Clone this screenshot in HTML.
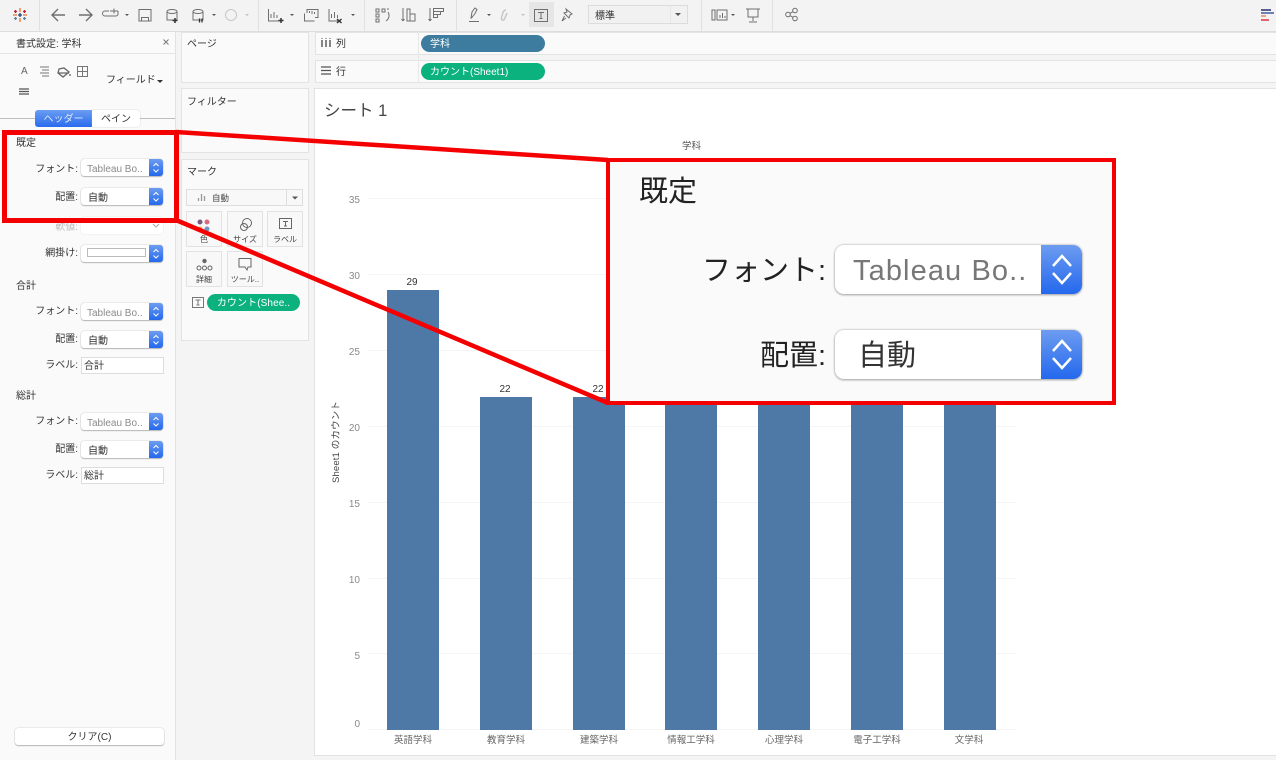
<!DOCTYPE html>
<html lang="ja"><head><meta charset="utf-8"><title>書式設定</title>
<style>
html,body{margin:0;padding:0}
body{width:1276px;height:760px;position:relative;overflow:hidden;background:#f4f4f4;font-family:"Liberation Sans","Noto Sans CJK JP",sans-serif;color:#333}
.a{position:absolute;white-space:nowrap}
.p{position:absolute;background:#fafafa;border:1px solid #e3e3e3;box-sizing:border-box}
.t{position:absolute;white-space:nowrap;font-size:10px;line-height:14px;margin-top:2px}
.l{position:absolute;white-space:nowrap;font-size:10px;line-height:14px;text-align:right;width:70px;left:8px;color:#333;margin-top:2px}
.s{position:absolute;left:81px;width:82px;height:17px;background:#fff;border-radius:3px;box-shadow:0 0 1px #999,0 1px 1px #bbb;font-size:10px;line-height:21px;padding-left:7px;box-sizing:border-box;color:#333}
.s.g{color:#8a8a8a;padding-left:6px}
.s i,.B i{position:absolute;right:0;top:0;width:14px;height:100%;background:linear-gradient(#6d9cf0,#2468ee);border-radius:0 3px 3px 0}
.s svg{position:absolute;right:0;top:0}
.i{position:absolute;left:81px;width:83px;height:17px;background:#fff;border:1px solid #ddd;box-sizing:border-box;font-size:10px;line-height:17px;padding-left:2px;color:#333}
.pill{position:absolute;left:421px;width:124px;border-radius:9px;color:#fff;font-size:10px;padding-left:9px;box-sizing:border-box}
.m{position:absolute;width:36px;height:36px;background:#f8f8f8;border:1px solid #e2e2e2;box-sizing:border-box;font-size:8px;line-height:10px;text-align:center;color:#444}
.m span{position:absolute;left:0;right:0;bottom:1px}
.bar{position:absolute;width:52px;background:#4e79a7;bottom:30.5px}
.y{position:absolute;left:330px;width:30px;text-align:right;font-size:10px;line-height:12px;color:#8a8a8a;margin-top:2px}
.g1{position:absolute;left:368px;width:648px;height:1px;background:#f5f5f5}
.x{position:absolute;top:734px;width:92px;text-align:center;font-size:9.500px;line-height:13px;color:#666}
.v{position:absolute;width:52px;text-align:center;font-size:10px;line-height:12px;color:#333;margin-top:2px}
.B{position:absolute;left:835px;width:247px;height:49px;background:#fff;border-radius:9px;box-shadow:0 0 2px #aaa,0 1px 2px #aaa;box-sizing:border-box;font-size:29px;line-height:53px}
.B i{width:41px;border-radius:0 9px 9px 0}
.B svg{position:absolute;right:0;top:0}
.L{position:absolute;right:450px;white-space:nowrap;font-size:29px;line-height:40px;color:#222}
</style></head><body>

<!-- toolbar -->
<div class="a" style="left:0;top:0;width:1276px;height:32px;background:#f3f3f3;border-bottom:1px solid #ddd;box-sizing:border-box"></div>
<div class="a" style="left:529px;top:2px;width:25px;height:25px;background:#e6e6e6"></div>
<svg class="a" style="left:0;top:0" width="1276" height="32" fill="none" stroke="#6f6f6f" stroke-width="1">
<g stroke="#e0e0e0"><path d="M39.500 0V31M258.500 0V31M364.500 0V31M456.500 0V31M701.500 0V31M772.500 0V31"/></g>
<!-- logo -->
<g stroke-width="1.300"><path d="M20 8v4M20 18v4M13 15h4M23 15h4" stroke="#e8762c"/><path d="M15.500 10v3M14 11.500h3M24.500 10v3M23 11.500h3" stroke="#c72035"/><path d="M15.500 17v3M14 18.500h3M24.500 17v3M23 18.500h3" stroke="#5b879b"/><path d="M18 15h4M20 13v4" stroke="#1f447e"/></g>
<!-- arrows -->
<path d="M65 15H52M58 9l-6 6 6 6" stroke-width="1.400"/><path d="M79 15h13M86 9l6 6-6 6" stroke-width="1.400"/>
<path d="M110 11h8M114 8.500v5M118 11v3a2 2 0 0 1-2 2h-11a2.500 2.500 0 0 1 0-5h4"/>
<path d="M139 9.500h12v11.500h-12zM141.500 21v-3.500h7v3.500"/>
<path d="M167 11.500a5 2 0 0 1 10 0v8.500h-10zM167 11.500a5 2 0 0 0 10 0"/><path d="M175 18v5M172.500 20.500h5" stroke="#333" stroke-width="1.500"/>
<path d="M193 11.500a5 2 0 0 1 10 0v8.500h-10zM193 11.500a5 2 0 0 0 10 0"/><path d="M199.500 18.500v4M202 18.500v4" stroke="#333" stroke-width="1.300"/>
<circle cx="231" cy="15" r="5.500" stroke="#c8c8c8"/>
<path d="M268.500 9v12h11M271 18v-4M274 18v-6M277 18v-3"/><path d="M281 18v5M278.500 20.500h5" stroke="#333" stroke-width="1.500"/>
<path d="M304.500 13.500v7.500h10M307 13v-3.500h11v8h-3M309.500 13v-2M312 14v-3M314.500 14v-2"/>
<path d="M329 9v12h11M331.500 18v-4M334.500 18v-6M337.500 18v-3"/><path d="M337 19l4.500 4M341.500 19l-4.500 4" stroke="#333" stroke-width="1.500"/>
<path d="M376 9h3v3h-3zM376 14h3v3h-3zM376 19h3v3h-3zM382 9h3v3h-3zM387 9h2M388 12c2 3 1 7-2 9"/>
<path d="M403 8v13M403 21l-1.500-2M403 21l1.500-2M407 9h3v12h-3zM410 14h5v7h-5z"/>
<path d="M430 8v13M430 21l-1.500-2M430 21l1.500-2M433.500 8.500h10v3h-10zM433.500 11.500h7v3h-7zM433.500 14.500h4v3h-4z"/>
<path d="M471 18l1-6 3-4 2 1.500-2 4-3.500 4.500zM469 21.500h10"/>
<path d="M506 10c-2 0-3 2-3.500 4l-1 4c-.4 2 2 3 3 1l2.500-6" stroke="#c6c6c6" stroke-width="1.500"/>
<path d="M534.500 9.500h13v12h-13zM538 12.500h6M541 12.500v6M539.500 18.500h3"/>
<path d="M566 9l6 5-2 1-1 3-5-5 3-1zM564.500 16l-2.500 5 4-3"/>
<path d="M712 10h3v10h-3zM717 10h10v10h-10zM720 18v-3M722.500 18v-5M725 18v-2"/>
<path d="M746 9h14M748 9v8h10V9M753 17v4M749 22h8"/>
<circle cx="788" cy="14.500" r="2.300"/><circle cx="795" cy="10.500" r="2.300"/><circle cx="795" cy="18.500" r="2.300"/><path d="M790 13.300l3-1.600M790 15.700l3 1.600"/>
<g fill="#555" stroke="none"><path d="M125 14h4l-2 2zM212 14h4l-2 2zM290 14h4l-2 2zM351 14h4l-2 2zM487 14h4l-2 2zM731 14h4l-2 2z"/><path fill="#c2c2c2" d="M245 14h4l-2 2zM521 14h4l-2 2z"/></g>
<g stroke="none"><rect x="1261" y="9" width="10" height="2" fill="#5a5f92"/><rect x="1261" y="12" width="13" height="2" fill="#6d81b4"/><rect x="1261" y="15" width="5" height="2" fill="#f0a27e"/><rect x="1261" y="19" width="8" height="2" fill="#e2646a"/></g>
</svg>
<div class="a" style="left:588px;top:5px;width:100px;height:19px;background:#f1f1f1;border:1px solid #dcdcdc;box-sizing:border-box;font-size:10px;line-height:21px;padding-left:6px">標準<svg class="a" style="right:0;top:0" width="17" height="17"><path d="M0 0v17" stroke="#ddd"/><path d="M5 7h6l-3 3z" fill="#555"/></svg></div>

<!-- left panel -->
<div class="a" style="left:0;top:32px;width:176px;height:728px;background:#fafafa;border-right:1px solid #e2e2e2;box-sizing:border-box"></div>
<div class="a" style="left:0;top:53px;width:175px;height:1px;background:#e4e4e4"></div>
<div class="t" style="left:16px;top:36px;color:#333">書式設定: 学科</div>
<svg class="a" style="left:162px;top:38px" width="9" height="9"><path d="M1.500 1.500l5 5M6.500 1.500l-5 5" stroke="#777"/></svg>
<svg class="a" style="left:16px;top:64px" width="76" height="34" fill="none" stroke="#777">
<path d="M61.500 2.500h10v10h-10zM61.500 7.500h10M66.500 2.500v10"/>
<path d="M24 4h9M26 7h7M24 10h9M26 13h7" transform="translate(0 -1)"/>
<path d="M43 5l5-1 5 4-6 5-5-4zM42 9h11M54 10v2" stroke="#666" stroke-width="1.300"/>
<path d="M3 25h10M3 27.500h10M3 30h10" stroke="#555" stroke-width="1.300"/>
</svg>
<div class="t" style="left:21px;top:63px;color:#666;font-size:10px">A</div>
<div class="t" style="left:106px;top:72px;color:#333">フィールド</div>
<svg class="a" style="left:156px;top:79px" width="8" height="5"><path d="M1 1h6L4 4z" fill="#333"/></svg>
<div class="a" style="left:0;top:118px;width:175px;height:1px;background:#bdbdbd"></div>
<div class="a" style="left:35px;top:110px;width:57px;height:17px;background:linear-gradient(#6a9cf2,#2a6cee);border-radius:3px 0 0 3px;color:#dfe9fb;font-size:10px;line-height:19px;text-align:center">ヘッダー</div>
<div class="a" style="left:92px;top:110px;width:48px;height:17px;background:#fff;border-radius:0 3px 3px 0;box-shadow:0 0 1px #aaa;font-size:10px;line-height:19px;text-align:center">ペイン</div>

<div class="t" style="left:16px;top:135px">既定</div>
<div class="l" style="top:161px">フォント:</div><div class="s g" style="top:159px">Tableau Bo..<i></i><svg width="14" height="17" fill="none" stroke="#fff"><path d="M4.500 7L7 4.500 9.500 7M4.500 10.500L7 13l2.500-2.500"/></svg></div>
<div class="l" style="top:189px">配置:</div><div class="s" style="top:188px">自動<i></i><svg width="14" height="17" fill="none" stroke="#fff"><path d="M4.500 7L7 4.500 9.500 7M4.500 10.500L7 13l2.500-2.500"/></svg></div>
<div class="l" style="top:219px;color:#bbb">軟値:</div>
<div class="a" style="left:81px;top:217px;width:82px;height:17px;background:#fff;border-radius:3px;box-shadow:0 0 1px #ccc"><svg class="a" style="right:2px;top:4px" width="10" height="10"><path d="M2 3l3 3 3-3" fill="none" stroke="#aaa"/></svg></div>
<div class="l" style="top:245px">網掛け:</div><div class="s" style="top:245px"><span class="a" style="left:6px;top:3px;width:59px;height:9px;border:1px solid #bbb;box-sizing:border-box"></span><i></i><svg width="14" height="17" fill="none" stroke="#fff"><path d="M4.500 7L7 4.500 9.500 7M4.500 10.500L7 13l2.500-2.500"/></svg></div>

<div class="t" style="left:16px;top:278px">合計</div>
<div class="l" style="top:303px">フォント:</div><div class="s g" style="top:303px">Tableau Bo..<i></i><svg width="14" height="17" fill="none" stroke="#fff"><path d="M4.500 7L7 4.500 9.500 7M4.500 10.500L7 13l2.500-2.500"/></svg></div>
<div class="l" style="top:331px">配置:</div><div class="s" style="top:331px">自動<i></i><svg width="14" height="17" fill="none" stroke="#fff"><path d="M4.500 7L7 4.500 9.500 7M4.500 10.500L7 13l2.500-2.500"/></svg></div>
<div class="l" style="top:357px">ラベル:</div><div class="i" style="top:357px">合計</div>

<div class="t" style="left:16px;top:388px">総計</div>
<div class="l" style="top:413px">フォント:</div><div class="s g" style="top:413px">Tableau Bo..<i></i><svg width="14" height="17" fill="none" stroke="#fff"><path d="M4.500 7L7 4.500 9.500 7M4.500 10.500L7 13l2.500-2.500"/></svg></div>
<div class="l" style="top:441px">配置:</div><div class="s" style="top:441px">自動<i></i><svg width="14" height="17" fill="none" stroke="#fff"><path d="M4.500 7L7 4.500 9.500 7M4.500 10.500L7 13l2.500-2.500"/></svg></div>
<div class="l" style="top:467px">ラベル:</div><div class="i" style="top:467px">総計</div>

<div class="a" style="left:15px;top:728px;width:149px;height:17px;background:#fff;border-radius:3px;box-shadow:0 0 1px #999,0 1px 1px #bbb;font-size:10px;line-height:19px;text-align:center">クリア(C)</div>

<!-- middle cards -->
<div class="p" style="left:181px;top:32px;width:128px;height:51px"></div>
<div class="t" style="left:187px;top:36px">ページ</div>
<div class="p" style="left:181px;top:88px;width:128px;height:65px"></div>
<div class="t" style="left:187px;top:94px">フィルター</div>
<div class="p" style="left:181px;top:159px;width:128px;height:182px"></div>
<div class="t" style="left:187px;top:164px">マーク</div>
<div class="a" style="left:186px;top:189px;width:117px;height:17px;background:#f8f8f8;border:1px solid #dedede;box-sizing:border-box;font-size:8.500px;line-height:16px;padding-left:25px;color:#444">自動
<svg class="a" style="left:10px;top:3px" width="10" height="9" stroke="#999" fill="none"><path d="M1.500 8V5M4.500 8V1M7.500 8V3" stroke-width="1.300"/></svg>
<svg class="a" style="right:0;top:0" width="16" height="15"><path d="M.5 0v15" stroke="#ddd"/><path d="M6 6.500h6l-3 3z" fill="#555"/></svg></div>
<div class="m" style="left:186px;top:211px"><span>色</span><svg class="a" style="left:9px;top:6px" width="16" height="16"><circle cx="4" cy="4" r="2.500" fill="#7a5a7c"/><circle cx="11" cy="4" r="2.500" fill="#dd6a80"/><circle cx="4" cy="11" r="2.500" fill="#f0a04b"/><circle cx="11" cy="11" r="2.500" fill="#6f94c6"/></svg></div>
<div class="m" style="left:227px;top:211px"><span>サイズ</span><svg class="a" style="left:9px;top:4px" width="18" height="18" fill="none" stroke="#666"><circle cx="10" cy="7" r="4.500"/><circle cx="7" cy="11" r="3.500"/></svg></div>
<div class="m" style="left:267px;top:211px"><span>ラベル</span><svg class="a" style="left:11px;top:6px" width="14" height="12" fill="none" stroke="#666"><path d="M.5.500h12v10H.5zM4 3.500h5M6.500 3.500v4.500M5 8h3"/></svg></div>
<div class="m" style="left:186px;top:251px"><span>詳細</span><svg class="a" style="left:9px;top:6px" width="17" height="14" fill="none" stroke="#666"><circle cx="8.500" cy="3" r="1.700" fill="#666"/><circle cx="3" cy="10" r="2"/><circle cx="8.500" cy="10" r="2"/><circle cx="14" cy="10" r="2"/></svg></div>
<div class="m" style="left:227px;top:251px"><span>ツール..</span><svg class="a" style="left:10px;top:5px" width="15" height="15" fill="none" stroke="#666"><path d="M1 1.500h12v8.500h-3l-1 3-2-3H1z"/></svg></div>
<svg class="a" style="left:192px;top:297px" width="12" height="11" fill="none" stroke="#777"><path d="M.5.500h11v10H.5zM3.500 3h5M6 3v5M4.500 8h3"/></svg>
<div class="a" style="left:207px;top:294px;width:93px;height:17px;border-radius:9px;background:#0bb27e;color:#fff;font-size:10px;line-height:20px;text-align:center;letter-spacing:.1px">カウント(Shee..</div>

<!-- shelves -->
<div class="p" style="left:315px;top:32px;width:961px;height:23px;border-right:0"></div>
<div class="p" style="left:315px;top:60px;width:961px;height:23px;border-right:0"></div>
<div class="a" style="left:418px;top:32px;width:1px;height:51px;background:#e8e8e8"></div>
<svg class="a" style="left:320px;top:37px" width="12" height="12" stroke="#555"><path d="M2 3v7M6 3v7M10 3v7" stroke-width="1.400"/><path d="M2 1v1M6 1v1M10 1v1"/></svg>
<svg class="a" style="left:320px;top:65px" width="12" height="11" stroke="#555"><path d="M1 2h10M1 5.500h10M1 9h10" stroke-width="1.200"/></svg>
<div class="t" style="left:336px;top:36px">列</div>
<div class="t" style="left:336px;top:64px">行</div>
<div class="pill" style="top:35px;height:17px;background:#3d7c9e;line-height:19px">学科</div>
<div class="pill" style="top:63px;height:17px;background:#0bb27e;line-height:19px">カウント(Sheet1)</div>

<!-- sheet -->
<div class="p" style="left:314px;top:88px;width:962px;height:668px;background:#fff;border-right:0"></div>
<div class="t" style="left:324px;top:98px;font-size:16.500px;line-height:23px;color:#444">シート 1</div>
<div class="t" style="left:682px;top:138px;font-size:9.500px;color:#555">学科</div>

<div class="g1" style="top:198px"></div><div class="g1" style="top:274px"></div><div class="g1" style="top:350px"></div><div class="g1" style="top:426px"></div><div class="g1" style="top:502px"></div><div class="g1" style="top:578px"></div><div class="g1" style="top:653px"></div><div class="g1" style="top:729px"></div>
<div class="y" style="top:193px">35</div><div class="y" style="top:269px">30</div><div class="y" style="top:345px">25</div><div class="y" style="top:421px">20</div><div class="y" style="top:497px">15</div><div class="y" style="top:573px">10</div><div class="y" style="top:649px">5</div><div class="y" style="top:717px">0</div>
<div class="a" style="left:337px;top:442px;width:0;height:0;font-size:9.500px;line-height:12px;color:#444"><span class="a" style="transform:translate(-50%,-50%) rotate(-90deg);letter-spacing:.15px">Sheet1 のカウント</span></div>

<div class="bar" style="left:387px;top:290px"></div>
<div class="bar" style="left:480px;top:397px"></div>
<div class="bar" style="left:573px;top:397px"></div>
<div class="bar" style="left:665px;top:397px"></div>
<div class="bar" style="left:758px;top:397px"></div>
<div class="bar" style="left:851px;top:397px"></div>
<div class="bar" style="left:944px;top:397px"></div>
<div class="v" style="left:386px;top:275px">29</div>
<div class="v" style="left:479px;top:382px">22</div>
<div class="v" style="left:572px;top:382px">22</div>
<div class="x" style="left:367px">英語学科</div><div class="x" style="left:460px">教育学科</div><div class="x" style="left:553px">建築学科</div><div class="x" style="left:645px">情報工学科</div><div class="x" style="left:738px">心理学科</div><div class="x" style="left:831px">電子工学科</div><div class="x" style="left:923px">文学科</div>

<!-- red annotation -->
<svg class="a" style="left:0;top:0" width="1276" height="760" fill="none" stroke="#f50000">
<rect x="4.500" y="132.500" width="172" height="88" stroke-width="5"/>
<path d="M176 132L608 160M176 220L608 403" stroke-width="4.500"/>
</svg>
<div class="a" style="left:606px;top:158px;width:510px;height:247px;background:#fafafa;border:4px solid #f50000;box-sizing:border-box"></div>
<div class="a" style="left:639px;top:172px;font-size:29px;line-height:40px;color:#222">既定</div>
<div class="L" style="top:251px">フォント:</div>
<div class="B" style="top:245px;color:#777;padding-left:18px;letter-spacing:1.100px">Tableau Bo..<i></i><svg width="41" height="49" fill="none" stroke="#fff" stroke-width="2.500"><path d="M12 21l9-10 9 10M12 28l9 10 9-10"/></svg></div>
<div class="L" style="top:336px">配置:</div>
<div class="B" style="top:330px;height:49px;color:#333;padding-left:23px">自動<i></i><svg width="41" height="49" fill="none" stroke="#fff" stroke-width="2.500"><path d="M12 21l9-10 9 10M12 28l9 10 9-10"/></svg></div>
</body></html>
